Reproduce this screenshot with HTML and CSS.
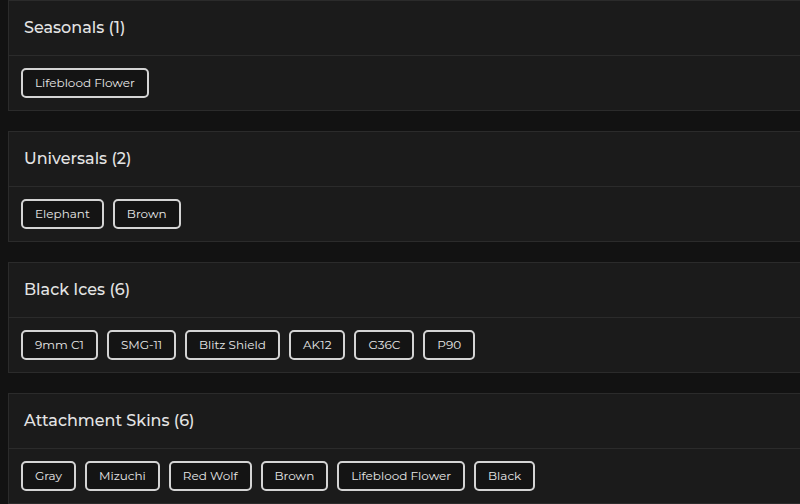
FILE: index.html
```html
<!DOCTYPE html>
<html>
<head>
<meta charset="utf-8">
<link rel="stylesheet" href="styles.css">
</head>
<body>
<main class="page">
  <section class="card">
    <header class="card-head"><h2>Seasonals (1)</h2></header>
    <div class="card-body">
      <span class="chip">Lifeblood Flower</span>
    </div>
  </section>
  <section class="card">
    <header class="card-head"><h2>Universals (2)</h2></header>
    <div class="card-body">
      <span class="chip">Elephant</span>
      <span class="chip">Brown</span>
    </div>
  </section>
  <section class="card">
    <header class="card-head"><h2>Black Ices (6)</h2></header>
    <div class="card-body">
      <span class="chip">9mm C1</span>
      <span class="chip">SMG-11</span>
      <span class="chip">Blitz Shield</span>
      <span class="chip">AK12</span>
      <span class="chip">G36C</span>
      <span class="chip">P90</span>
    </div>
  </section>
  <section class="card">
    <header class="card-head"><h2>Attachment Skins (6)</h2></header>
    <div class="card-body">
      <span class="chip">Gray</span>
      <span class="chip">Mizuchi</span>
      <span class="chip">Red Wolf</span>
      <span class="chip">Brown</span>
      <span class="chip">Lifeblood Flower</span>
      <span class="chip">Black</span>
    </div>
  </section>
</main>
</body>
</html>
```

FILE: styles.css
```css
html, body {
  margin: 0;
  padding: 0;
  background: #121212;
  font-family: "Montserrat", "Noto Sans", "DejaVu Sans", sans-serif;
  color: #e6e6e6;
}
.page {
  display: flex;
  flex-direction: column;
  gap: 20px;
  padding: 0 0 0 8px;
  width: 820px;
}
.card {
  background: #1b1b1b;
  border: 1px solid #2b2b2b;
}
.card-head {
  box-sizing: border-box;
  height: 54px;
  display: flex;
  align-items: center;
  padding: 0 15px 2px;
  border-bottom: 1px solid #2b2b2b;
  height: 55px;
}
.card-head h2 {
  margin: 0;
  font-size: 16px;
  font-weight: 500;
  color: #e4e4e4;
}
.card-body {
  display: flex;
  gap: 9px;
  padding: 12px;
}
.chip {
  box-sizing: border-box;
  height: 30px;
  display: inline-flex;
  align-items: center;
  padding: 0 12px 1px;
  border: 2px solid #d4d4d4;
  border-radius: 5px;
  background: #141414;
  font-size: 12px;
  color: #e8e8e8;
}
```
